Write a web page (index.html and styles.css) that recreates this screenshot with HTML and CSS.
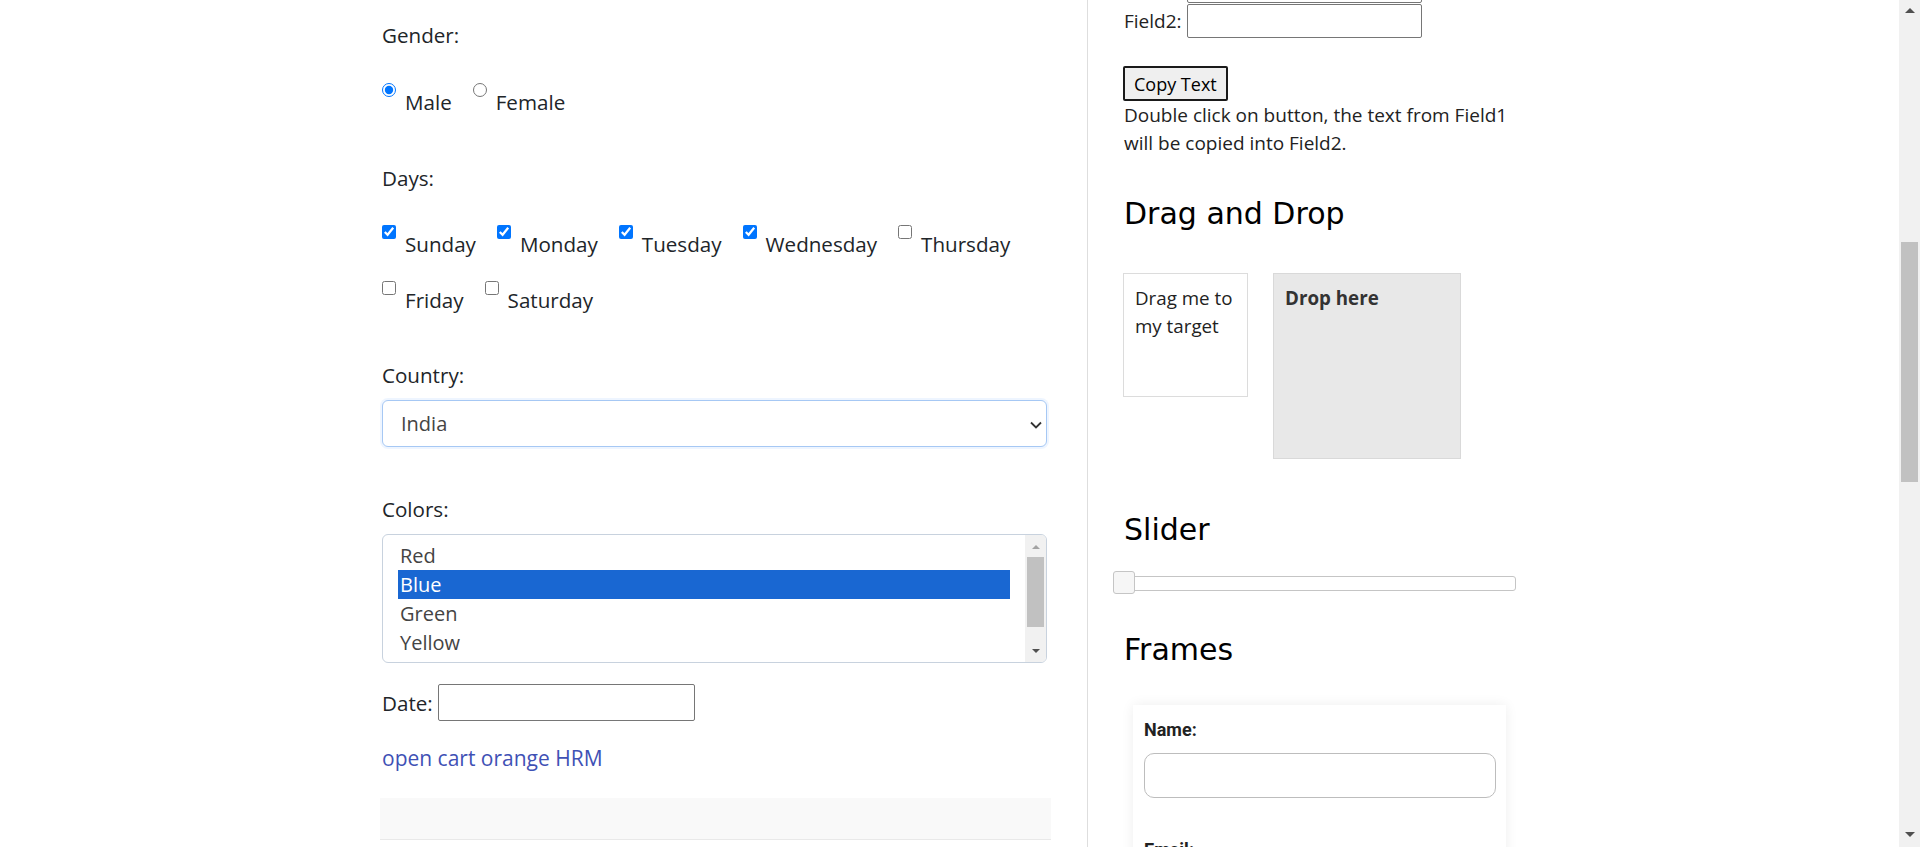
FILE: index.html
```html
<!DOCTYPE html>
<html lang="en">
<head>
<meta charset="utf-8">
<title>Automation Testing Practice</title>
<link rel="stylesheet" href="styles.css">
</head>
<body>
<div class="page">
  <main class="main">
    <div class="form">
      <div class="label">Gender:</div>
      <div class="choices gender">
        <span class="choice"><input type="radio" name="gender" id="male" checked><label for="male">Male</label></span>
        <span class="choice"><input type="radio" name="gender" id="female"><label for="female">Female</label></span>
      </div>

      <div class="label group">Days:</div>
      <div class="choices days">
        <span class="choice"><input type="checkbox" id="sunday" checked><label for="sunday">Sunday</label></span>
        <span class="choice"><input type="checkbox" id="monday" checked><label for="monday">Monday</label></span>
        <span class="choice"><input type="checkbox" id="tuesday" checked><label for="tuesday">Tuesday</label></span>
        <span class="choice"><input type="checkbox" id="wednesday" checked><label for="wednesday">Wednesday</label></span>
        <span class="choice"><input type="checkbox" id="thursday"><label for="thursday">Thursday</label></span>
        <span class="choice"><input type="checkbox" id="friday"><label for="friday">Friday</label></span>
        <span class="choice"><input type="checkbox" id="saturday"><label for="saturday">Saturday</label></span>
      </div>

      <div class="label group country-label">Country:</div>
      <div class="select-wrap">
        <select class="country" id="country"><option>India</option></select>
        <svg class="chev" viewBox="0 0 12 8" width="12" height="8" aria-hidden="true"><polyline points="1,1.5 6,6.5 11,1.5" fill="none" stroke="#333" stroke-width="1.8"/></svg>
      </div>

      <div class="label group">Colors:</div>
      <div class="listbox" role="listbox" aria-multiselectable="true">
        <div class="opts">
          <div class="opt" role="option">Red</div>
          <div class="opt sel" role="option" aria-selected="true">Blue</div>
          <div class="opt" role="option">Green</div>
          <div class="opt" role="option">Yellow</div>
          <div class="opt" role="option">White</div>
        </div>
        <div class="vscroll">
          <span class="arr up light"></span>
          <span class="thumb"></span>
          <span class="arr down"></span>
        </div>
      </div>

      <div class="date-row">
        <label for="datepicker">Date:</label>
        <input type="text" id="datepicker">
      </div>

      <a class="link" href="#">open cart orange HRM</a>
    </div>
    <div class="band"></div>
  </main>

  <aside class="side">
    <div class="field"><label for="field1">Field1:</label><input type="text" id="field1"></div>
    <div class="field"><label for="field2">Field2:</label><input type="text" id="field2"></div>
    <button class="copy" type="button">Copy Text</button>
    <p class="hint">Double click on button, the text from Field1<br>will be copied into Field2.</p>

    <h2 class="h-dnd">Drag and Drop</h2>
    <div class="dnd">
      <div class="drag">Drag me to my target</div>
      <div class="drop">Drop here</div>
    </div>

    <h2 class="h-slider">Slider</h2>
    <div class="slider"><span class="handle"></span></div>

    <h2 class="h-frames">Frames</h2>
    <div class="frame">
      <label class="f-label" for="fname">Name:</label>
      <input class="f-input" type="text" id="fname">
      <label class="f-label next" for="femail">Email:</label>
      <input class="f-input" type="text" id="femail">
    </div>
  </aside>
</div>

<div class="page-scroll" aria-hidden="true">
  <span class="arr up big"></span>
  <span class="pthumb"></span>
  <span class="arr down big"></span>
</div>
</body>
</html>
```

FILE: styles.css
```css
* { box-sizing: border-box; }

html, body {
  margin: 0;
  height: 847px;
  overflow: hidden;
  background: #fff;
}

body {
  font-family: "Segoe UI", "Open Sans", sans-serif;
  color: #212529;
}

.page {
  display: flex;
  align-items: stretch;
  height: 847px;
  padding-left: 380px;
}

/* ---------- main column ---------- */
.main {
  flex: none;
  width: 671px;
  font-size: 20.6px;
  line-height: 30px;
}

.form {
  margin: 0 4px 0 2px;
  padding-top: 20px;
}

.label.group { margin-top: 45.5px; }
.label.group + .select-wrap,
.label.group + .listbox { margin-top: 10.5px; }

.choices {
  display: flex;
  flex-wrap: wrap;
  column-gap: 21px;
  row-gap: 22px;
}
.choices.gender { margin-top: 32.5px; }
.choices.days { margin-top: 31.5px; }
.choices + .label.group { margin-top: 46.5px; }
.choices + .label.country-label { margin-top: 45px; }
.select-wrap + .label.group { margin-top: 46.5px; }

.choice {
  display: inline-flex;
  align-items: flex-start;
}
.choice input {
  width: 14px;
  height: 14px;
  margin: 0 9px 0 0;
  flex: none;
}
.choice label { padding-top: 4px; }

.select-wrap { position: relative; }
.country {
  appearance: none;
  -webkit-appearance: none;
  display: block;
  width: 100%;
  height: 47px;
  margin: 0;
  padding: 0 40px 0 18px;
  border: 1px solid #a6c8f4;
  border-radius: 6px;
  box-shadow: 0 0 0 2px rgba(13, 110, 253, 0.07);
  background: #fff;
  font-family: inherit;
  font-size: 20px;
  color: #444;
  outline: none;
}
.chev {
  position: absolute;
  right: 5px;
  top: 21px;
  pointer-events: none;
}

.listbox {
  display: flex;
  height: 129px;
  border: 1px solid #c8d2de;
  border-radius: 6px;
  overflow: hidden;
  background: #fff;
  font-size: 20px;
}
.opts {
  flex: 1;
  padding: 6px 15px 0 15px;
}
.opt {
  height: 29px;
  line-height: 29px;
  padding-left: 2px;
  color: #444;
}
.opt.sel {
  background: #1967d2;
  color: #fff;
}
.vscroll {
  flex: none;
  width: 21px;
  background: #f1f1f1;
  display: flex;
  flex-direction: column;
  align-items: center;
}
.arr {
  display: block;
  width: 0;
  height: 0;
  border-left: 4px solid transparent;
  border-right: 4px solid transparent;
}
.arr.up { border-bottom: 4px solid #505050; }
.arr.down { border-top: 4px solid #505050; }
.vscroll .arr.up { margin: 10px 0 8px; }
.arr.up.light { border-bottom-color: #a3a3a3; }
.vscroll .thumb {
  display: block;
  width: 17px;
  height: 70px;
  background: #c1c1c1;
}
.vscroll .arr.down { margin-top: 22px; }

.date-row {
  display: flex;
  align-items: center;
  margin-top: 21px;
}
.date-row input {
  width: 257px;
  height: 37px;
  margin: 0 0 0 5px;
  border: 1px solid #767676;
  border-radius: 2px;
  font: inherit;
}

.link {
  display: block;
  margin-top: 21.5px;
  font-size: 21px;
  color: #3f51b5;
  text-decoration: none;
}

.band {
  margin-top: 25.5px;
  height: 42px;
  background: #f9f9f9;
  border-bottom: 1px solid #e9e9e9;
}

/* ---------- side column ---------- */
.side {
  flex: none;
  width: 520px;
  margin-left: 36px;
  padding-left: 36px;
  border-left: 1px solid #dedede;
  font-size: 19px;
  line-height: 28px;
  color: #222;
}

.field {
  display: flex;
  align-items: center;
  height: 34px;
}
.field:first-child { margin-top: -31px; }
.field + .field { margin-top: 1px; }
.field input {
  width: 235px;
  height: 34px;
  margin: 0 0 0 5px;
  border: 1px solid #767676;
  border-radius: 2px;
  font: inherit;
}

.copy {
  display: block;
  margin: 28px 0 0 -1px;
  height: 35px;
  padding: 0 9px;
  border: 2px solid #1a1a1a;
  border-radius: 2px;
  background: #efefef;
  font-family: "Segoe UI", "Open Sans", sans-serif;
  font-size: 18px;
  color: #000;
}

.hint { margin: 0; }

.side h2 {
  margin: 0;
  font-family: "DejaVu Sans", Verdana, sans-serif;
  font-size: 30px;
  line-height: 36px;
  font-weight: 400;
  color: #000;
}
.side .h-dnd { margin-top: 38.7px; }
.side .h-slider { margin-top: 52.7px; }
.side .h-frames { margin-top: 40.7px; }

.dnd {
  display: flex;
  align-items: flex-start;
  gap: 25px;
  margin: 41.3px 0 0 -1px;
}
.drag {
  width: 125px;
  height: 124px;
  padding: 10px 11px;
  border: 1px solid #dcdcdc;
  font-size: 18.75px;
}
.drop {
  width: 188px;
  height: 186px;
  padding: 10px 11px;
  border: 1px solid #d9d9d9;
  background: #e8e8e8;
  font-size: 18.75px;
  font-weight: 700;
  color: #333;
}

.slider {
  position: relative;
  width: 392px;
  height: 15px;
  margin-top: 28.3px;
  border: 1px solid #c5c5c5;
  border-radius: 3px;
  background: #fff;
}
.handle {
  position: absolute;
  top: -6px;
  left: -12px;
  width: 22px;
  height: 23px;
  border: 1px solid #c5c5c5;
  border-radius: 3px;
  background: #f6f6f6;
}

.frame {
  width: 373px;
  height: 220px;
  margin: 37.3px 0 0 9px;
  padding: 14px 10px 0 11px;
  background: #fff;
  box-shadow: 0 0 12px rgba(0, 0, 0, 0.07);
}
.f-label {
  display: block;
  font-family: Roboto, "Liberation Sans", sans-serif;
  font-weight: 700;
  font-size: 18px;
  line-height: 22px;
  color: #222;
}
.f-label.next { margin-top: 40.7px; }
.f-input {
  display: block;
  width: 352px;
  height: 45px;
  margin-top: 12px;
  border: 1px solid #bdbdbd;
  border-radius: 10px;
}

/* ---------- window scrollbar (overlay) ---------- */
.page-scroll {
  position: fixed;
  top: 0;
  right: 0;
  width: 21px;
  height: 847px;
  background: #f1f1f1;
  display: flex;
  flex-direction: column;
  align-items: center;
}
.arr.big {
  border-left-width: 5px;
  border-right-width: 5px;
}
.page-scroll .arr.up { margin-top: 8px; border-bottom-width: 5px; }
.pthumb {
  display: block;
  width: 17px;
  height: 240px;
  margin-top: 229px;
  background: #c1c1c1;
}
.page-scroll .arr.down { margin-top: 350px; border-top-width: 5px; }
```
